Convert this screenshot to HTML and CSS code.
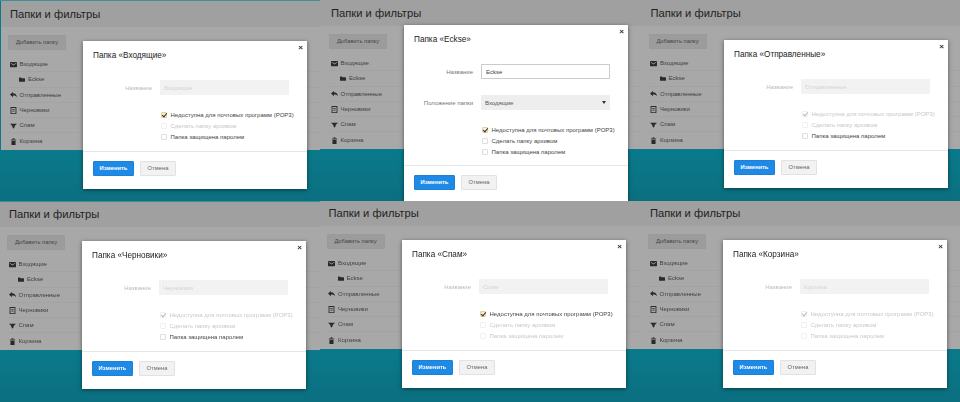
FILE: index.html
```html
<!DOCTYPE html>
<html lang="ru">
<head>
<meta charset="utf-8">
<title>Папки и фильтры</title>
<link rel="stylesheet" href="styles.css">
</head>
<body>
<svg class="defs" width="0" height="0" aria-hidden="true">
  <symbol id="i-mail" viewBox="0 0 12 12"><path fill="#2a2a2a" fill-rule="evenodd" d="M1 1.500h10a1 1 0 0 1 1 1v7a1 1 0 0 1-1 1H1a1 1 0 0 1-1-1v-7a1 1 0 0 1 1-1zm0 2.500 5 3.500L11 4V2.800L6 6 1 2.800z"/></symbol>
  <symbol id="i-folder" viewBox="0 0 12 12"><path fill="#2a2a2a" d="M0 3a1 1 0 0 1 1-1h3l1 1.300h6a1 1 0 0 1 1 1V9.500a1 1 0 0 1-1 1H1a1 1 0 0 1-1-1z"/></symbol>
  <symbol id="i-reply" viewBox="0 0 12 12"><path fill="#2a2a2a" d="M5 1.500 0 6l5 4.500V7.500c3 0 5 .5 7 3-.5-4-3-6.500-7-6.500z"/></symbol>
  <symbol id="i-draft" viewBox="0 0 12 12"><path fill="#2a2a2a" fill-rule="evenodd" d="M1 0h10v12H1zm1.500 1.500v9h7v-9zM4 3.500h4v1.200H4zm0 3h4v1.200H4z"/></symbol>
  <symbol id="i-spam" viewBox="0 0 12 12"><path fill="#2a2a2a" d="M0 3h12L8 7v1.500L6 11.500 4 8.500V7z"/></symbol>
  <symbol id="i-trash" viewBox="0 0 12 12"><path fill="#2a2a2a" d="M1.500 2.500h9v1.200h-9zm1 2h7V12h-7zM4.500 .5h3v1.500h-3z"/></symbol>
</svg>
<main class="sheet">

  <section class="shot shot-1">
    <div class="page">
      <h1 class="page-title">Папки и фильтры</h1>
      <div class="page-body">
        <button class="add-btn" type="button">Добавить папку</button>
        <ul class="folders">
          <li><svg class="fi"><use href="#i-mail"/></svg>Входящие</li>
          <li class="sub"><svg class="fi"><use href="#i-folder"/></svg>Eckse</li>
          <li><svg class="fi"><use href="#i-reply"/></svg>Отправленные</li>
          <li><svg class="fi"><use href="#i-draft"/></svg>Черновики</li>
          <li><svg class="fi"><use href="#i-spam"/></svg>Спам</li>
          <li><svg class="fi"><use href="#i-trash"/></svg>Корзина</li>
        </ul>
      </div>
    </div>
    <div class="modal">
      <span class="close">×</span>
      <h2 class="modal-title">Папка «Входящие»</h2>
      <div class="modal-form">
        <div class="field"><label class="lbl off">Название</label><div class="inp off">Входящие</div></div>
        <div class="checks">
          <div class="chk"><span class="box on"></span>Недоступна для почтовых программ (POP3)</div>
          <div class="chk off"><span class="box"></span>Сделать папку архивом</div>
          <div class="chk"><span class="box"></span>Папка защищена паролем</div>
        </div>
      </div>
      <div class="modal-foot"><button class="ok" type="button">Изменить</button><button class="no" type="button">Отмена</button></div>
    </div>
  </section>

  <section class="shot shot-2">
    <div class="page">
      <h1 class="page-title">Папки и фильтры</h1>
      <div class="page-body">
        <button class="add-btn" type="button">Добавить папку</button>
        <ul class="folders">
          <li><svg class="fi"><use href="#i-mail"/></svg>Входящие</li>
          <li class="sub"><svg class="fi"><use href="#i-folder"/></svg>Eckse</li>
          <li><svg class="fi"><use href="#i-reply"/></svg>Отправленные</li>
          <li><svg class="fi"><use href="#i-draft"/></svg>Черновики</li>
          <li><svg class="fi"><use href="#i-spam"/></svg>Спам</li>
          <li><svg class="fi"><use href="#i-trash"/></svg>Корзина</li>
        </ul>
      </div>
    </div>
    <div class="modal">
      <span class="close">×</span>
      <h2 class="modal-title">Папка «Eckse»</h2>
      <div class="modal-form modal-form-tall">
        <div class="field"><label class="lbl">Название</label><div class="inp live">Eckse</div></div>
        <div class="field"><label class="lbl">Положение папки</label><div class="inp sel">Входящие<span class="caret"></span></div></div>
        <div class="checks">
          <div class="chk"><span class="box on"></span>Недоступна для почтовых программ (POP3)</div>
          <div class="chk"><span class="box"></span>Сделать папку архивом</div>
          <div class="chk"><span class="box"></span>Папка защищена паролем</div>
        </div>
      </div>
      <div class="modal-foot"><button class="ok" type="button">Изменить</button><button class="no" type="button">Отмена</button></div>
    </div>
  </section>

  <section class="shot shot-3">
    <div class="page">
      <h1 class="page-title">Папки и фильтры</h1>
      <div class="page-body">
        <button class="add-btn" type="button">Добавить папку</button>
        <ul class="folders">
          <li><svg class="fi"><use href="#i-mail"/></svg>Входящие</li>
          <li class="sub"><svg class="fi"><use href="#i-folder"/></svg>Eckse</li>
          <li><svg class="fi"><use href="#i-reply"/></svg>Отправленные</li>
          <li><svg class="fi"><use href="#i-draft"/></svg>Черновики</li>
          <li><svg class="fi"><use href="#i-spam"/></svg>Спам</li>
          <li><svg class="fi"><use href="#i-trash"/></svg>Корзина</li>
        </ul>
      </div>
    </div>
    <div class="modal">
      <span class="close">×</span>
      <h2 class="modal-title">Папка «Отправленные»</h2>
      <div class="modal-form">
        <div class="field"><label class="lbl off">Название</label><div class="inp off">Отправленные</div></div>
        <div class="checks">
          <div class="chk off"><span class="box on off-on"></span>Недоступна для почтовых программ (POP3)</div>
          <div class="chk off"><span class="box"></span>Сделать папку архивом</div>
          <div class="chk"><span class="box"></span>Папка защищена паролем</div>
        </div>
      </div>
      <div class="modal-foot"><button class="ok" type="button">Изменить</button><button class="no" type="button">Отмена</button></div>
    </div>
  </section>

  <section class="shot shot-4">
    <div class="page">
      <h1 class="page-title">Папки и фильтры</h1>
      <div class="page-body">
        <button class="add-btn" type="button">Добавить папку</button>
        <ul class="folders">
          <li><svg class="fi"><use href="#i-mail"/></svg>Входящие</li>
          <li class="sub"><svg class="fi"><use href="#i-folder"/></svg>Eckse</li>
          <li><svg class="fi"><use href="#i-reply"/></svg>Отправленные</li>
          <li><svg class="fi"><use href="#i-draft"/></svg>Черновики</li>
          <li><svg class="fi"><use href="#i-spam"/></svg>Спам</li>
          <li><svg class="fi"><use href="#i-trash"/></svg>Корзина</li>
        </ul>
      </div>
    </div>
    <div class="modal">
      <span class="close">×</span>
      <h2 class="modal-title">Папка «Черновики»</h2>
      <div class="modal-form">
        <div class="field"><label class="lbl off">Название</label><div class="inp off">Черновики</div></div>
        <div class="checks">
          <div class="chk off"><span class="box on off-on"></span>Недоступна для почтовых программ (POP3)</div>
          <div class="chk off"><span class="box"></span>Сделать папку архивом</div>
          <div class="chk"><span class="box"></span>Папка защищена паролем</div>
        </div>
      </div>
      <div class="modal-foot"><button class="ok" type="button">Изменить</button><button class="no" type="button">Отмена</button></div>
    </div>
  </section>

  <section class="shot shot-5">
    <div class="page">
      <h1 class="page-title">Папки и фильтры</h1>
      <div class="page-body">
        <button class="add-btn" type="button">Добавить папку</button>
        <ul class="folders">
          <li><svg class="fi"><use href="#i-mail"/></svg>Входящие</li>
          <li class="sub"><svg class="fi"><use href="#i-folder"/></svg>Eckse</li>
          <li><svg class="fi"><use href="#i-reply"/></svg>Отправленные</li>
          <li><svg class="fi"><use href="#i-draft"/></svg>Черновики</li>
          <li><svg class="fi"><use href="#i-spam"/></svg>Спам</li>
          <li><svg class="fi"><use href="#i-trash"/></svg>Корзина</li>
        </ul>
      </div>
    </div>
    <div class="modal">
      <span class="close">×</span>
      <h2 class="modal-title">Папка «Спам»</h2>
      <div class="modal-form">
        <div class="field"><label class="lbl off">Название</label><div class="inp off">Спам</div></div>
        <div class="checks">
          <div class="chk"><span class="box on"></span>Недоступна для почтовых программ (POP3)</div>
          <div class="chk off"><span class="box"></span>Сделать папку архивом</div>
          <div class="chk off"><span class="box"></span>Папка защищена паролем</div>
        </div>
      </div>
      <div class="modal-foot"><button class="ok" type="button">Изменить</button><button class="no" type="button">Отмена</button></div>
    </div>
  </section>

  <section class="shot shot-6">
    <div class="page">
      <h1 class="page-title">Папки и фильтры</h1>
      <div class="page-body">
        <button class="add-btn" type="button">Добавить папку</button>
        <ul class="folders">
          <li><svg class="fi"><use href="#i-mail"/></svg>Входящие</li>
          <li class="sub"><svg class="fi"><use href="#i-folder"/></svg>Eckse</li>
          <li><svg class="fi"><use href="#i-reply"/></svg>Отправленные</li>
          <li><svg class="fi"><use href="#i-draft"/></svg>Черновики</li>
          <li><svg class="fi"><use href="#i-spam"/></svg>Спам</li>
          <li><svg class="fi"><use href="#i-trash"/></svg>Корзина</li>
        </ul>
      </div>
    </div>
    <div class="modal">
      <span class="close">×</span>
      <h2 class="modal-title">Папка «Корзина»</h2>
      <div class="modal-form">
        <div class="field"><label class="lbl off">Название</label><div class="inp off">Корзина</div></div>
        <div class="checks">
          <div class="chk off"><span class="box on off-on"></span>Недоступна для почтовых программ (POP3)</div>
          <div class="chk off"><span class="box"></span>Сделать папку архивом</div>
          <div class="chk off"><span class="box"></span>Папка защищена паролем</div>
        </div>
      </div>
      <div class="modal-foot"><button class="ok" type="button">Изменить</button><button class="no" type="button">Отмена</button></div>
    </div>
  </section>

</main>
</body>
</html>
```

FILE: styles.css
```css
* { box-sizing: border-box; }
html, body { margin: 0; padding: 0; }
body {
  width: 960px;
  height: 402px;
  overflow: hidden;
  background: #0b7687;
  font-family: "Liberation Sans", Arial, sans-serif;
  color: #333;
}
.defs { position: absolute; }
.sheet {
  display: grid;
  grid-template-columns: repeat(3, 320px);
  grid-template-rows: 201px 201px;
  filter: blur(.4px);
}
.shot {
  position: relative;
  overflow: hidden;
  background: linear-gradient(#0a7a8b 75%, #0b6f80);
}
.shot-1::before, .shot-4::before {
  content: "";
  position: absolute;
  inset: 0 0 auto;
  height: 1px;
  background: #3f8f9b;
}
.page {
  height: 150px;
  margin-top: var(--top);
  margin-left: var(--inset);
  background: #a8a8a8;
}
.shot-1 { --inset: 1px; --text: 9px; --top: 0px; }
.shot-2 { --inset: 0px; --text: 11px; --top: -1px; }
.shot-3 { --inset: 0px; --text: 10.500px; --top: -1px; }
.shot-4 { --inset: 0px; --text: 9px; --top: -1px; }
.shot-5 { --inset: 0px; --text: 8.500px; --top: -2px; }
.shot-6 { --inset: 0px; --text: 10px; --top: -2px; }
.page-title {
  margin: 0;
  height: 27px;
  padding-left: var(--text);
  background: #a0a0a0;
  font-size: 11.200px;
  font-weight: 400;
  line-height: 28px;
  color: #1f1f1f;
}
.page-body { padding: 8px 0 0 calc(var(--text) - 2px); }
.add-btn {
  display: block;
  width: 58px;
  height: 15px;
  padding: 0;
  border: 1px solid #9a9a9a;
  border-radius: 1px;
  background: #9c9c9c;
  font: 5.800px/13px "Liberation Sans", Arial, sans-serif;
  color: #444;
}
.folders {
  list-style: none;
  margin: 7px 0 0;
  padding: 0;
}
.folders li {
  display: flex;
  align-items: center;
  gap: 3px;
  height: 15.300px;
  padding-left: 1.500px;
  border-bottom: 1px solid #a3a3a3;
  font-size: 6px;
  color: #404040;
}
.folders li:last-child { border-bottom: 0; }
.folders .sub { padding-left: 11px; }
.fi { width: 7px; height: 7px; flex: none; }
.sub .fi { width: 6px; }
.modal {
  position: absolute;
  left: 83px;
  top: 41px;
  width: 224px;
  background: #fff;
  box-shadow: 0 1px 4px rgba(0, 0, 0, .5);
}
.shot-2 .modal { left: 84px; top: 25px; }
.shot-3 .modal { left: 84px; top: 40px; }
.shot-4 .modal { left: 82px; top: 40px; }
.shot-5 .modal { left: 82px; top: 39px; }
.shot-6 .modal { left: 83px; top: 39px; }
.close {
  position: absolute;
  right: 4px;
  top: 2px;
  font-size: 8px;
  line-height: 10px;
  font-weight: 700;
  color: #333;
}
.modal-title {
  margin: 0;
  padding: 9px 10px 0;
  height: 31px;
  font-size: 8.200px;
  font-weight: 400;
  line-height: 12px;
  color: #222;
}
.modal-form {
  height: 80px;
  padding-top: 8px;
  border-bottom: 1px solid #e6e6e6;
}
.modal-form-tall { height: 110px; }
.field {
  display: flex;
  align-items: center;
  gap: 8px;
  height: 15px;
  margin-bottom: 16px;
}
.lbl {
  width: 69px;
  text-align: right;
  font-size: 6px;
  color: #777;
}
.lbl.off { color: #bbb; }
.inp {
  display: flex;
  align-items: center;
  width: 129px;
  height: 15px;
  padding-left: 4px;
  font-size: 6px;
}
.inp.off { background: #f2f2f2; color: #d4d4d4; }
.inp.live { background: #fff; border: 1px solid #ccc; color: #444; }
.inp.sel { position: relative; background: #eee; color: #555; }
.caret {
  position: absolute;
  right: 4px;
  top: 6px;
  border: 2px solid transparent;
  border-top: 3px solid #333;
  border-bottom: 0;
}
.checks { margin-top: -2px; padding-left: 78px; }
.chk {
  display: flex;
  align-items: center;
  gap: 3.500px;
  height: 11px;
  font-size: 6px;
  color: #444;
}
.chk.off { color: #c8c8c8; }
.box {
  position: relative;
  flex: none;
  width: 6px;
  height: 6px;
  border: 1px solid #ddd;
  border-radius: 1px;
  background: #fff;
}
.chk.off .box { border-color: #f0f0f0; }
.box.on { background: #fbeacb; border-color: #e6cfa0; }
.box.on::after {
  content: "";
  position: absolute;
  left: 1px;
  top: -1px;
  width: 2px;
  height: 4px;
  border: solid #333;
  border-width: 0 1px 1px 0;
  transform: rotate(40deg);
}
.chk.off .box.off-on { background: #fff; border-color: #f0f0f0; }
.chk.off .box.off-on::after { border-color: #bbb; }
.modal-foot {
  display: flex;
  gap: 6px;
  padding: 9px 10px 13px;
}
.ok, .no {
  height: 15px;
  padding: 0;
  font: 5.800px/13px "Liberation Sans", Arial, sans-serif;
  border-radius: 1px;
}
.ok {
  width: 41px;
  border: 1px solid #1a80d8;
  background: #1e8ae6;
  color: #fff;
  font-weight: 700;
}
.no {
  width: 36px;
  border: 1px solid #e2e2e2;
  background: #f2f2f2;
  color: #666;
}
```
